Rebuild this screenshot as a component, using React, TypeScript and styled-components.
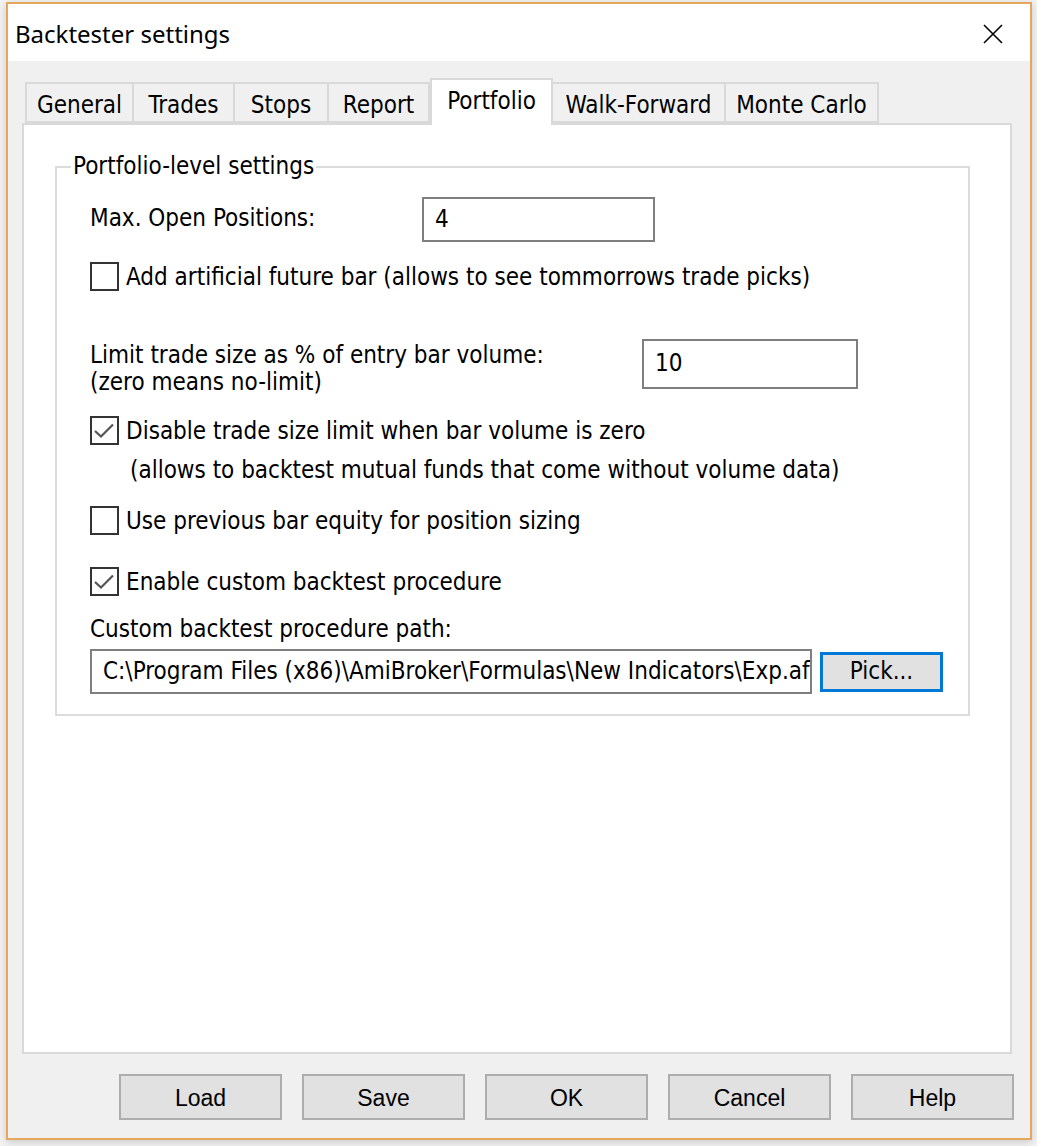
import React from 'react'
import styled, { createGlobalStyle } from 'styled-components'

const GlobalStyle = createGlobalStyle`
  html, body {
    margin: 0;
    padding: 0;
  }
  body {
    background: #f3f3f3;
    font-family: 'DejaVu Sans Condensed', 'DejaVu Sans', sans-serif;
    color: #000;
  }
`

const Desktop = styled.div`
  width: 1037px;
  height: 1146px;
  box-sizing: border-box;
  padding: 2px 5px 6px 6px;
  display: flex;
`

const Window = styled.div`
  flex: 1;
  display: flex;
  flex-direction: column;
  border: 2px solid #e6a65c;
  background: #f0f0f0;
  box-shadow: 0 2px 8px rgba(0, 0, 0, 0.18);
`

const TitleBar = styled.div`
  height: 57px;
  flex-shrink: 0;
  background: #fff;
  display: flex;
  align-items: center;
  justify-content: space-between;
  padding: 0 27px 0 7px;
`

const TitleText = styled.div`
  font-family: 'Noto Sans', 'Open Sans', sans-serif;
  font-size: 24px;
  color: #000;
  margin-top: 1px;
`

const CloseButton = styled.div`
  width: 20px;
  height: 20px;
  display: flex;
  margin-top: 2px;
`

const Client = styled.div`
  flex: 1;
  display: flex;
  flex-direction: column;
  padding: 17px 18px 0 14px;
`

const TabStrip = styled.div`
  display: flex;
  align-items: flex-end;
  padding-left: 3px;
  position: relative;
  z-index: 1;
`

const Tab = styled.div<{ $w: number; $active?: boolean }>`
  width: ${(p) => p.$w}px;
  box-sizing: border-box;
  height: ${(p) => (p.$active ? 47 : 41)}px;
  margin-bottom: ${(p) => (p.$active ? -2 : 0)}px;
  background: ${(p) => (p.$active ? '#fff' : '#f0f0f0')};
  border: 2px solid #d9d9d9;
  border-bottom: ${(p) => (p.$active ? 'none' : '2px solid #d9d9d9')};
  border-left-width: ${(p) => (p.$active ? 2 : 0)}px;
  &:first-child {
    border-left-width: 2px;
  }
  display: flex;
  justify-content: center;
  padding-top: ${(p) => (p.$active ? 8 : 8)}px;
  font-size: 24px;
  line-height: 27px;
  white-space: nowrap;
`

const Panel = styled.div`
  flex: 1;
  background: #fff;
  border: 2px solid #d9d9d9;
  padding: 0 40px 0 31px;
`

const GroupBox = styled.fieldset`
  margin: 28px 0 0;
  padding: 0 20px 20px 33px;
  border: 2px solid #dcdcdc;
  display: flex;
  flex-direction: column;
  align-items: flex-start;
`

const Legend = styled.legend`
  margin-left: -19px;
  padding: 0 2px;
  font-size: 24px;
  line-height: 27px;
`

const Text = styled.div<{ $top?: number; $indent?: number }>`
  font-size: 24px;
  line-height: 27px;
  white-space: nowrap;
  margin-top: ${(p) => p.$top ?? 0}px;
  margin-left: ${(p) => p.$indent ?? 0}px;
`

const FieldRow = styled.div<{ $top: number; $labelWidth: number }>`
  display: grid;
  grid-template-columns: ${(p) => p.$labelWidth}px auto;
  align-items: start;
  margin-top: ${(p) => p.$top}px;
`

const FieldLabel = styled.div<{ $pad: number }>`
  font-size: 24px;
  line-height: 27px;
  padding-top: ${(p) => p.$pad}px;
  white-space: nowrap;
`

const Input = styled.div<{ $w: number; $h: number }>`
  width: ${(p) => p.$w}px;
  height: ${(p) => p.$h}px;
  box-sizing: border-box;
  border: 2px solid #7f7f7f;
  background: #fff;
  font-size: 24px;
  display: flex;
  align-items: center;
  padding: 0 0 2px 11px;
  white-space: nowrap;
  overflow: hidden;
`

const CheckRow = styled.div<{ $top: number }>`
  display: flex;
  align-items: center;
  gap: 7px;
  margin-top: ${(p) => p.$top}px;
  height: 29px;
  font-size: 24px;
  white-space: nowrap;
`

const Box = styled.div`
  width: 29px;
  height: 29px;
  box-sizing: border-box;
  border: 2px solid #333;
  background: #fff;
  display: flex;
`

const PathRow = styled.div`
  display: flex;
  align-items: center;
  gap: 8px;
  margin-top: 6px;
`

const PickButton = styled.div`
  width: 123px;
  height: 40px;
  box-sizing: border-box;
  border: 3px solid #0078d7;
  background: #e1e1e1;
  display: flex;
  align-items: center;
  justify-content: center;
  font-size: 24px;
  padding-bottom: 2px;
`

const Footer = styled.div`
  display: flex;
  justify-content: flex-end;
  gap: 20px;
  padding: 20px 0 18px 0;
  margin-right: -2px;
`

const Button = styled.div`
  width: 163px;
  height: 46px;
  box-sizing: border-box;
  border: 2px solid #adadad;
  background: #e1e1e1;
  display: flex;
  align-items: center;
  justify-content: center;
  font-family: 'Liberation Sans Narrow', 'Liberation Sans', sans-serif;
  font-size: 23px;
  padding-top: 3px;
`

const CheckBox = ({ checked }: { checked?: boolean }) => (
  <Box>
    {checked && (
      <svg width="25" height="25" viewBox="0 0 25 25">
        <polyline points="3,13 9,18.5 21,6.5" fill="none" stroke="#555" strokeWidth="2.2" />
      </svg>
    )}
  </Box>
)

const tabs = [
  { label: 'General', w: 109 },
  { label: 'Trades', w: 101 },
  { label: 'Stops', w: 94 },
  { label: 'Report', w: 101 },
  { label: 'Portfolio', w: 123, active: true },
  { label: 'Walk-Forward', w: 173 },
  { label: 'Monte Carlo', w: 153 },
]

const buttons = ['Load', 'Save', 'OK', 'Cancel', 'Help']

export default function App() {
  return (
    <>
      <GlobalStyle />
      <Desktop>
        <Window>
          <TitleBar>
            <TitleText>Backtester settings</TitleText>
            <CloseButton>
              <svg width="20" height="20" viewBox="0 0 20 20">
                <path d="M1 1 L19 19 M19 1 L1 19" stroke="#000" strokeWidth="1.6" />
              </svg>
            </CloseButton>
          </TitleBar>
          <Client>
            <TabStrip>
              {tabs.map((t) => (
                <Tab key={t.label} $w={t.w} $active={t.active}>
                  {t.label}
                </Tab>
              ))}
            </TabStrip>
            <Panel>
              <GroupBox>
                <Legend>Portfolio-level settings</Legend>
                <FieldRow $top={17} $labelWidth={332}>
                  <FieldLabel $pad={8}>Max. Open Positions:</FieldLabel>
                  <Input $w={233} $h={45}>4</Input>
                </FieldRow>
                <CheckRow $top={20}>
                  <CheckBox />
                  Add artificial future bar (allows to see tommorrows trade picks)
                </CheckRow>
                <FieldRow $top={48} $labelWidth={552}>
                  <FieldLabel $pad={3}>
                    Limit trade size as % of entry bar volume:
                    <br />
                    (zero means no-limit)
                  </FieldLabel>
                  <Input $w={216} $h={50}>10</Input>
                </FieldRow>
                <CheckRow $top={20}>
                  <CheckBox checked />
                  Disable trade size limit when bar volume is zero
                </CheckRow>
                <Text $top={12} $indent={40}>
                  (allows to backtest mutual funds that come without volume data)
                </Text>
                <CheckRow $top={22}>
                  <CheckBox />
                  Use previous bar equity for position sizing
                </CheckRow>
                <CheckRow $top={32}>
                  <CheckBox checked />
                  Enable custom backtest procedure
                </CheckRow>
                <Text $top={20}>Custom backtest procedure path:</Text>
                <PathRow>
                  <Input $w={722} $h={45}>
                    C:\Program Files (x86)\AmiBroker\Formulas\New Indicators\Exp.afl
                  </Input>
                  <PickButton>Pick...</PickButton>
                </PathRow>
              </GroupBox>
            </Panel>
            <Footer>
              {buttons.map((b) => (
                <Button key={b}>{b}</Button>
              ))}
            </Footer>
          </Client>
        </Window>
      </Desktop>
    </>
  )
}
